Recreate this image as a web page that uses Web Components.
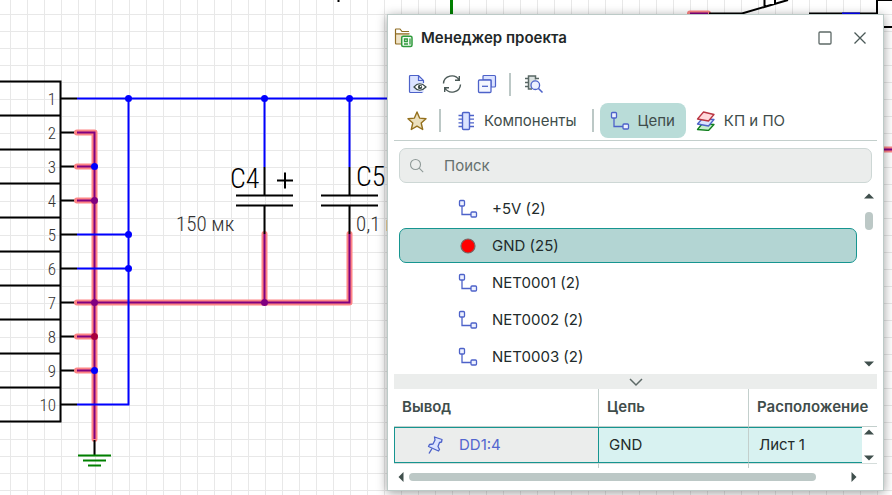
<!DOCTYPE html>
<html lang="ru">
<head>
<meta charset="utf-8">
<title>Менеджер проекта</title>
<style>
html, body { margin: 0; height: 100%; }
body { overflow: hidden; font: 15px/20px Inter, "Noto Sans", sans-serif; color: #222b2b; background: #fff; }
</style>
</head>
<body>
<eda-desktop>
  <schematic-canvas></schematic-canvas>
  <project-window slot="window" heading="Менеджер проекта">
    <tool-row>
      <icon-button icon="preview" label="Просмотр"></icon-button>
      <icon-button icon="refresh" label="Обновить"></icon-button>
      <icon-button icon="collapse" label="Свернуть все"></icon-button>
      <tool-separator></tool-separator>
      <icon-button icon="find" label="Найти компонент"></icon-button>
    </tool-row>
    <view-tabs></view-tabs>
    <search-box></search-box>
    <net-list>
      <net-item>+5V (2)</net-item>
      <net-item selected>GND (25)</net-item>
      <net-item>NET0001 (2)</net-item>
      <net-item>NET0002 (2)</net-item>
      <net-item>NET0003 (2)</net-item>
    </net-list>
    <split-handle></split-handle>
    <pin-table></pin-table>
  </project-window>
</eda-desktop>

<script>
const RESET = `
  *, *::before, *::after { box-sizing: border-box; }
  button { font: inherit; color: inherit; background: none; border: 0; padding: 0; margin: 0; display: inline-flex; align-items: center; justify-content: center; }
  svg { display: block; }
`;

function define(name, render) {
  customElements.define(name, class extends HTMLElement {
    constructor() {
      super();
      this.attachShadow({ mode: "open" });
    }
    connectedCallback() {
      this.shadowRoot.innerHTML = `<style>${RESET}</style>` + render(this);
    }
  });
}

const ICONS = {
  project: [20, `<path d="M1.500 15V3.500q0-2 2-2H6l2 2h7V5.500H3q-1.500 0-1.500 1.500z" fill="#fff"/><path d="M1.500 6h13v3H8v7H3q-1.500 0-1.500-1.500z" fill="#f0e4c8"/><path d="M7 16H2.500q-1 0-1-1V1.500q0-.5.5-.5h4l2 2.500h7M1.500 5.800h14" fill="none" stroke="#8f6c22" stroke-width="1.200"/><rect x="7.700" y="8.200" width="10.300" height="10.300" rx="1.500" fill="#f2fbf2" stroke="#2f9a3c" stroke-width="1.500"/><path d="M10.500 11h2.800v2.500h-2.800zM10 16h4M16 10.500v6" fill="none" stroke="#2f9a3c" stroke-width="1.300"/>`],
  maximize: [14, `<rect x="1" y="1" width="12" height="12" rx="1" fill="none" stroke="#5d6967" stroke-width="1.300"/>`],
  close: [14, `<path d="M1.500 1.500l11 11M12.500 1.500l-11 11" fill="none" stroke="#4b5957" stroke-width="1.300"/>`],
  preview: [20, `<path d="M2.700 2.500q0-1 1-1h8l5 5v12h-13q-1 0-1-1z" fill="#dbe3ff"/><path d="M16.500 9V6.500l-5-5h-8q-1 0-1 1v15q0 1 1 1h12M11.500 1.500v5h5" fill="none" stroke="#4d62c9" stroke-width="1.200"/><path d="M7 13q5.500-6.500 12 0q-6.500 6.500-12 0z" fill="#fff" stroke="#3c4b49" stroke-width="1.200"/><circle cx="13" cy="13" r="2.200" fill="#3c4b49"/><circle cx="13.600" cy="12.500" r=".7" fill="#fff"/>`],
  refresh: [20, `<path d="M1.500 9.500a8.300 8 0 0 1 15.500-3.500M18.500 10.500a8.300 8 0 0 1-15.500 3.500M17.300 2v4.200H13M2.700 18v-4.200H7" fill="none" stroke="#4b5957" stroke-width="1.400"/>`],
  collapse: [20, `<path d="M6 6V2.500q0-1 1-1h10.500q1 0 1 1V12q0 1-1 1H14V6z" fill="#dbe3ff" stroke="#4d62c9" stroke-width="1.200"/><rect x="1.500" y="6" width="12.500" height="12.500" rx="1" fill="#f5f7ff" stroke="#4d62c9" stroke-width="1.300"/><path d="M5 12.300h6" stroke="#4d62c9" stroke-width="1.300"/>`],
  find: [20, `<path d="M4.500 2h7v5l-3 3v5h-4z" fill="#dbe2e0"/><path d="M8 15H4.500V2h7v3.500M1 4.500h3M1 8.500h3M1 12.500h3M12 4.500h3" fill="none" stroke="#5a6865" stroke-width="1.500"/><circle cx="11.300" cy="11.200" r="4.300" fill="#edf1ff" stroke="#4d62c9" stroke-width="1.300"/><path d="M14.500 14.500l4 4" stroke="#4d62c9" stroke-width="1.600"/>`],
  star: [20, `<path d="M10 1l2.600 6.100 6.400.600-4.800 4.300 1.500 6.500L10 15.200l-5.700 3.300 1.500-6.500L1 7.700l6.400-.6z" fill="#ece0bd" stroke="#94701d" stroke-width="1.400" stroke-linejoin="round"/>`],
  chip: [20, `<rect x="6.500" y="1.500" width="7" height="17" rx="1" fill="#dbe3ff" stroke="#4d62c9" stroke-width="1.400"/><path d="M2.500 4.500h4M2.500 8.200h4M2.500 11.900h4M2.500 15.500h4M14 4.500h4M14 8.200h4M14 11.900h4M14 15.500h4" stroke="#4d62c9" stroke-width="1.300"/>`],
  net: [20, `<path d="M4 7v8.500h9" fill="none" stroke="#4d62c9" stroke-width="1.300"/><rect x="1.500" y="1.500" width="5" height="5.500" rx="1" fill="#edf1ff" stroke="#4d62c9" stroke-width="1.300"/><rect x="13" y="13" width="5.500" height="5" rx="1" fill="#edf1ff" stroke="#4d62c9" stroke-width="1.300"/>`],
  layers: [20, `<g stroke-width="1.300" stroke-linejoin="round"><path d="M1.500 18.500L6 13l12 .5-5.500 6z" fill="#c6edcd" stroke="#12801f"/><path d="M1.500 13L6 8l12 .5-5.500 6.500z" fill="#dbe3ff" stroke="#4d62c9"/><path d="M1.500 8L7.500 1l10.500 2.500-5.500 6.500z" fill="#ffd9dc" stroke="#b93542"/></g>`],
  search: [16, `<circle cx="6.500" cy="6.500" r="5" fill="none" stroke="#8e9997" stroke-width="1.100"/><path d="M10.200 10.200l4 4" stroke="#8e9997" stroke-width="1.100"/>`],
  dot: [20, `<circle cx="10" cy="10" r="7" fill="#f00" stroke="#766" stroke-width="1.200"/>`],
  pin: [20, `<path d="M9.500 2l7.500 2.500-.5 2.500-2 .5-1.500 4 1.500 3-1 1.500-10-4.500 1-2 3.500-.5 2-4z" fill="#dbe3ff" stroke="#4d62c9" stroke-width="1.300" stroke-linejoin="round"/><path d="M7 13.500L4 18.500" stroke="#4d62c9" stroke-width="1.400"/>`],
  up: [10, `<path d="M0 7.500L5 2.500l5 5z" fill="#3f4f4c"/>`],
  down: [10, `<path d="M0 2.500h10l-5 5z" fill="#3f4f4c"/>`],
  left: [10, `<path d="M7.500 0v10L2.500 5z" fill="#3f4f4c"/>`],
  right: [10, `<path d="M2.500 0v10l5-5z" fill="#3f4f4c"/>`],
  chevron: [14, `<path d="M1 4l6 6 6-6" fill="none" stroke="#5d6967" stroke-width="1.500"/>`]
};

define("ui-icon", el => {
  const [size, body] = ICONS[el.getAttribute("name")];
  return `<style>:host { display: inline-block; flex: none; }</style>
    <svg width="${size}" height="${size}" viewBox="0 0 ${size} ${size}" aria-hidden="true">${body}</svg>`;
});

define("icon-button", el => `
  <style>
    :host { display: inline-flex; }
    button { min-width: 10px; min-height: 10px; }
  </style>
  <button type="button" aria-label="${el.getAttribute("label")}"><ui-icon name="${el.getAttribute("icon")}"></ui-icon></button>`);

define("tool-separator", () => `<style>:host { display: block; width: 2px; height: 23px; background: #bcc8c6; }</style>`);

define("tool-row", () => `
  <style>
    :host { display: flex; align-items: center; gap: 15px; padding: 0 13px; height: 34px; }
    ::slotted(tool-separator) { margin-right: -2px; margin-left: -3px; }
  </style><slot></slot>`);

define("view-tabs", () => `
  <style>
    :host { display: flex; align-items: center; height: 39px; padding: 0 6px 0 13px; border-bottom: 1px solid #c3cfcc; color: #3f4d4b; }
    button { gap: 8px; height: 35px; padding: 0 11px 0 10px; border-radius: 8px; white-space: nowrap; }
    button[aria-selected=true] { background: #b9dcd8; }
    tool-separator { margin: 0 5px 0 12px; }
    .second { margin: 0 6px 0 4px; }
  </style>
  <icon-button icon="star" label="Избранное"></icon-button>
  <tool-separator></tool-separator>
  <button type="button"><ui-icon name="chip"></ui-icon>Компоненты</button>
  <tool-separator class="second"></tool-separator>
  <button type="button" aria-selected="true"><ui-icon name="net"></ui-icon>Цепи</button>
  <button type="button"><ui-icon name="layers"></ui-icon>КП и ПО</button>`);

define("search-box", () => `
  <style>
    :host { display: block; padding: 7px 5px 7px; }
    label { display: flex; align-items: center; gap: 19px; height: 35px; padding: 0 9px; border: 1px solid #cdd7d5; border-radius: 7px; background: #ebedec; }
    input { flex: 1; min-width: 0; border: 0; padding: 0; outline: 0; background: none; font: inherit; color: #222b2b; }
    input::placeholder { color: #66716f; opacity: 1; }
  </style>
  <label><ui-icon name="search"></ui-icon><input type="text" aria-label="Поиск" placeholder="Поиск"></label>`);

define("net-list", () => `
  <style>
    :host { display: flex; flex: 1; min-height: 184px; }
    .items { flex: 1; display: flex; flex-direction: column; gap: 2px; padding: 1px 0 0 5px; }
    .bar { width: 20px; display: flex; flex-direction: column; align-items: center; padding: 1px 2px 5px 5px; }
    .thumb { width: 8px; height: 18px; margin-top: 11px; border-radius: 4px; background: #bcc8c6; }
    .bar icon-button:last-child { margin-top: auto; }
  </style>
  <div class="items" role="listbox" aria-label="Цепи"><slot></slot></div>
  <div class="bar">
    <icon-button icon="up" label="Вверх"></icon-button>
    <div class="thumb"></div>
    <icon-button icon="down" label="Вниз"></icon-button>
  </div>`);

define("net-item", el => `
  <style>
    :host { display: flex; align-items: center; gap: 14px; height: 35px; padding-left: 58px; border: 1px solid transparent; border-radius: 7px; box-sizing: border-box; }
    :host([selected]) { background: #b3d5d3; border-color: #169590; }
  </style>
  <ui-icon name="${el.hasAttribute("selected") ? "dot" : "net"}"></ui-icon><span><slot></slot></span>`);

define("split-handle", () => `
  <style>
    :host { display: flex; justify-content: center; align-items: center; height: 15px; background: #ebedec; }
  </style>
  <icon-button icon="chevron" label="Свернуть таблицу"></icon-button>`);

define("pin-table", () => `
  <style>
    :host { display: block; }
    table { width: 100%; table-layout: fixed; border-collapse: separate; border-spacing: 0; text-align: left; }
    th, td { padding: 0 8px; white-space: nowrap; }
    th { height: 38px; padding-bottom: 2px; font-weight: 600; color: #3f4d4b; border-bottom: 1px solid #c3cfcc; }
    th + th, .end td + td { border-left: 1px solid #c3cfcc; }
    th:last-child { padding-right: 0; }
    .row td { height: 36px; padding-left: 10px; background: #d8f2f1; border: solid #169590; border-width: 1px 0; }
    .row td:first-child { background: #ebedec; border-width: 1px 0 1px 1px; padding: 0 0 0 30px; color: #5366cf; }
    .row td:nth-child(2) { border-left-width: 1px; }
    .row td:nth-child(3) { border-left: 1px solid #c3cfcc; }
    .row td.scroll { padding: 0 0 0 2px; background: none; border: 0; }
    .scroll div { display: flex; flex-direction: column; justify-content: space-between; height: 36px; }
    .pin { display: flex; align-items: center; gap: 14px; }
    .end td { height: 5px; padding: 0; border-top: 1px solid #d5dddb; }
    .bar { display: flex; align-items: center; height: 18px; margin-bottom: 4px; padding: 0 18px 0 2px; }
    .track { flex: 1; padding: 0 33px 0 3px; }
    .thumb { height: 8px; border-radius: 4px; background: #bcc8c6; }
  </style>
  <table>
    <colgroup><col style="width:204px"><col style="width:150px"><col><col style="width:15px"></colgroup>
    <thead><tr><th scope="col">Вывод</th><th scope="col">Цепь</th><th scope="col" colspan="2">Расположение</th></tr></thead>
    <tbody>
      <tr class="row">
        <td><div class="pin"><ui-icon name="pin"></ui-icon>DD1:4</div></td><td>GND</td><td>Лист 1</td>
        <td class="scroll"><div><icon-button icon="up" label="Вверх"></icon-button><icon-button icon="down" label="Вниз"></icon-button></div></td>
      </tr>
      <tr class="end" aria-hidden="true"><td></td><td></td><td colspan="2"></td></tr>
    </tbody>
  </table>
  <div class="bar">
    <icon-button icon="left" label="Влево"></icon-button>
    <div class="track"><div class="thumb"></div></div>
    <icon-button icon="right" label="Вправо"></icon-button>
  </div>`);

define("project-window", el => `
  <style>
    :host { display: flex; flex-direction: column; box-sizing: border-box; background: #fff; border: 1px solid #bccac7; padding: 0 6px; box-shadow: 0 2px 10px rgba(0, 0, 0, .38); }
    header { display: flex; align-items: center; height: 46px; margin-bottom: 6px; }
    h1 { flex: 1; margin: 0 0 0 7px; font-size: 15px; line-height: 20px; font-weight: 600; color: #1f2828; }
    .actions { display: flex; gap: 21px; padding-right: 10px; }
  </style>
  <header>
    <ui-icon name="project"></ui-icon>
    <h1>${el.getAttribute("heading")}</h1>
    <div class="actions"><icon-button icon="maximize" label="Развернуть"></icon-button><icon-button icon="close" label="Закрыть"></icon-button></div>
  </header>
  <slot></slot>`);

define("eda-desktop", () => `
  <style>
    :host { display: block; position: relative; height: 100%; min-height: 480px; overflow: hidden; }
    ::slotted(project-window) { position: absolute; left: 387px; right: 8px; top: 14px; bottom: 4px; }
  </style>
  <slot></slot><slot name="window"></slot>`);

define("schematic-canvas", () => {
  const pinY = n => 64.5 + 34 * n;
  const all = Array.from({ length: 10 }, (_, i) => i + 1);
  const dot = (x, y, c) => `<circle cx="${x}" cy="${y}" r="3.500" fill="${c}"/>`;
  const capacitor = x => `
    <path class="blue" d="M${x} 98.500V167"/>
    <path class="black" d="M${x} 167V195.500M${x - 28.5} 195.500h57M${x - 28.5} 205.500h57M${x} 205.500V234"/>`;
  const hot = "M77 132.500H94.500V439M77 166.500H94.500M77 200.500H94.500M77 302.500H349.500V234M264.500 302.500V234M77 336.500H94.500M77 370.500H94.500M690 13.500H708M880 149.500H892";
  return `
  <style>
    :host { display: block; height: 100%; }
    svg { width: 100%; height: 100%; font-family: "Roboto Condensed", "Liberation Sans Narrow", Roboto, sans-serif; font-weight: 300; fill: #333; }
    path { fill: none; stroke-width: 2; }
    .black { stroke: #000; }
    .edge { stroke: #000; stroke-width: 2; }
    .blue { stroke: #00f; }
    .green { stroke: #008000; }
    .halo { stroke: #fd8585; stroke-width: 6; stroke-linecap: round; stroke-linejoin: round; }
    .core { stroke: #800080; stroke-width: 2; }
    .n { font-size: 17px; text-anchor: end; }
    .v { font-size: 21px; }
    .r { font-size: 28px; fill: #000; }
  </style>
  <svg role="img" aria-label="Схема">
    <defs><pattern id="grid" width="17" height="17" x="10" y="14" patternUnits="userSpaceOnUse"><path d="M.5 0V17M0 .5H17" stroke="#e8e8e8" style="stroke-width:1"/></pattern></defs>
    <rect width="100%" height="100%" fill="url(#grid)"/>
    <path class="edge" d="M0 81.500H60.500V421.500H0${all.slice(1).map(n => `M0 ${47.5 + 34 * n}H60`).join("")}"/>
    <path class="black" d="${all.map(n => `M61 ${pinY(n)}H77`).join("")}"/>
    ${all.map(n => `<text class="n" x="56" y="${pinY(n) + 6}">${n}</text>`).join("")}
    <path class="halo" d="${hot}"/>
    <path class="core" d="${hot}"/>
    <path class="blue" d="M77 98.500H390M128.500 98.500V404.500H77M77 234.500H128.500M77 268.500H128.500"/>
    ${capacitor(264.5)}${capacitor(349.5)}
    ${[[128.5, 98.5], [264.5, 98.5], [349.5, 98.5], [94.5, 166.5], [128.5, 234.5], [128.5, 268.5], [94.5, 370.5]].map(p => dot(...p, "#00f")).join("")}
    ${dot(94.5, 200.5, "#800080")}${dot(94.5, 302.5, "#800080")}${dot(264.5, 302.5, "#800080")}${dot(94.5, 336.5, "#a8003c")}
    <path class="black" d="M94.500 440V455M277 180.500h16M285 172.500v16"/>
    <path class="green" d="M78 455.500h33M83 460.500h23M88 465.500h13"/>
    <text class="r" x="230" y="188">C4</text><text class="r" x="356" y="186">C5</text>
    <text class="v" x="176" y="231">150 мк</text><text class="v" x="356" y="231">0,1 мк</text>
    <path class="green" d="M451.500 0V14" style="stroke-width:3"/>
    <path class="black" d="M338.500 0v2M709 13.500h33L788 0M764.500 0v7M775 0v4M809 13.500h68V0"/>
    <path class="blue" d="M842 13.500h18"/>
    <path class="edge" d="M877 0h15M880 27h12"/>
  </svg>`;
});
</script>
</body>
</html>
